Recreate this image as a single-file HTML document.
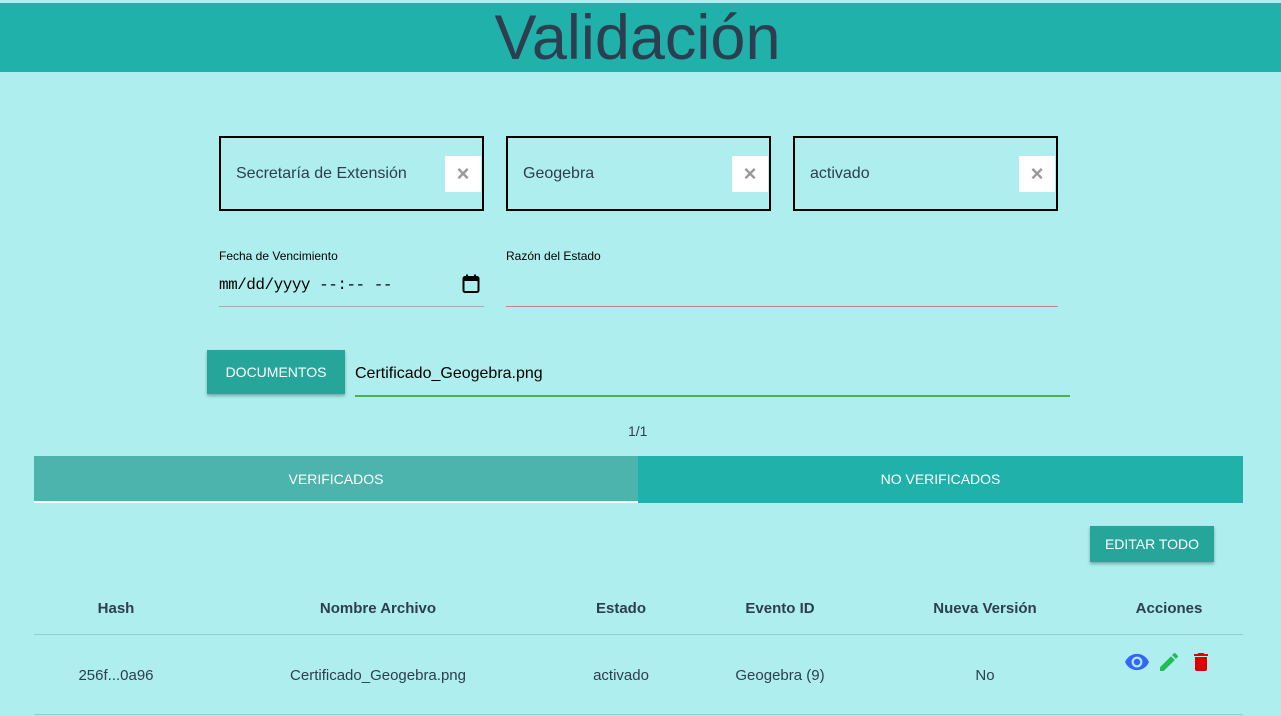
<!DOCTYPE html>
<html><head><meta charset="utf-8"><style>
*{box-sizing:border-box;margin:0;padding:0}
body{width:1281px;height:716px;background:#afeeee;font-family:"Liberation Sans",sans-serif;position:relative;overflow:hidden}
.hdr{position:absolute;left:0;top:3px;width:1281px;height:69px;background:#20b2aa;text-align:center;color:#2c3e50;font-size:63px;line-height:70px;padding-right:6px}
.sel{position:absolute;top:136px;width:265px;height:75px;border:2px solid #000}
.sel span{position:absolute;left:15px;top:27px;font-size:16px;color:#2c3e50}
.sel i{position:absolute;right:1px;top:18px;width:36px;height:36px;background:#fff;color:#999;font-style:normal;font-size:22px;font-weight:bold;text-align:center;line-height:36px}
.lbl{position:absolute;font-size:12px;color:#000}
.line{position:absolute;height:1px;background:#b9878a}
.btn{position:absolute;background:#26a69a;color:#fff;font-size:14px;text-align:center;box-shadow:0 2px 3px rgba(0,0,0,.3)}
.tab{position:absolute;top:456px;height:47px;color:#fff;font-size:14px;text-align:center;line-height:47px}
.th,.td{position:absolute;font-size:15px;color:#2c3e50;text-align:center;transform:translateX(-50%);white-space:nowrap}
.th{top:600px;font-weight:bold}
.td{top:667px}
</style></head><body>
<div class="hdr">Validación</div>
<div class="sel" style="left:219px"><span>Secretaría de Extensión</span><i>×</i></div>
<div class="sel" style="left:506px"><span>Geogebra</span><i>×</i></div>
<div class="sel" style="left:793px"><span>activado</span><i>×</i></div>
<div class="lbl" style="left:219px;top:249px">Fecha de Vencimiento</div>
<div style="position:absolute;left:219px;top:276px;font-size:16px;font-family:'Liberation Mono',monospace;color:#000;letter-spacing:-0.5px">mm/dd/yyyy --:-- --</div>
<svg style="position:absolute;left:462px;top:274px" width="18" height="20" viewBox="0 0 18 20"><rect x="1.5" y="3" width="15" height="15" rx="1.5" fill="none" stroke="#000" stroke-width="2"/><rect x="1.5" y="3" width="15" height="4" fill="#000"/><rect x="4" y="0.5" width="2" height="4" fill="#000"/><rect x="12" y="0.5" width="2" height="4" fill="#000"/></svg>
<div class="line" style="left:219px;top:306px;width:265px;background:#aaa"></div>
<div class="lbl" style="left:506px;top:249px">Razón del Estado</div>
<div class="line" style="left:506px;top:306px;width:552px"></div>
<div class="btn" style="left:207px;top:350px;width:138px;height:44px;line-height:44px">DOCUMENTOS</div>
<div style="position:absolute;left:355px;top:365px;font-size:16px;color:#000">Certificado_Geogebra.png</div>
<div class="line" style="left:355px;top:395px;width:715px;height:2px;background:#4caf50"></div>
<div style="position:absolute;left:628px;top:423px;font-size:14px;color:#2c3e50">1/1</div>
<div class="tab" style="left:34px;width:604px;background:#4db3ad">VERIFICADOS</div>
<div style="position:absolute;left:34px;top:501px;width:604px;height:2px;background:#fff"></div>
<div class="tab" style="left:638px;width:605px;background:#20b2aa">NO VERIFICADOS</div>
<div class="btn" style="left:1090px;top:526px;width:124px;height:36px;line-height:36px">EDITAR TODO</div>
<div class="th" style="left:116px">Hash</div>
<div class="th" style="left:378px">Nombre Archivo</div>
<div class="th" style="left:621px">Estado</div>
<div class="th" style="left:780px">Evento ID</div>
<div class="th" style="left:985px">Nueva Versión</div>
<div class="th" style="left:1169px">Acciones</div>
<div style="position:absolute;left:34px;top:634px;width:1209px;height:1px;background:#8fcfcf"></div>
<div class="td" style="left:116px">256f...0a96</div>
<div class="td" style="left:378px">Certificado_Geogebra.png</div>
<div class="td" style="left:621px">activado</div>
<div class="td" style="left:780px">Geogebra (9)</div>
<div class="td" style="left:985px">No</div>
<svg style="position:absolute;left:1124px;top:649px" width="26" height="26" viewBox="0 0 24 24"><path fill="#3366ff" d="M12 4.5C7 4.5 2.7 7.6 1 12c1.7 4.4 6 7.5 11 7.5s9.3-3.1 11-7.5c-1.7-4.4-6-7.5-11-7.5zM12 17a5 5 0 1 1 0-10 5 5 0 0 1 0 10zm0-8a3 3 0 1 0 0 6 3 3 0 0 0 0-6z"/></svg>
<svg style="position:absolute;left:1157px;top:650px" width="24" height="24" viewBox="0 0 24 24"><path fill="#22bb55" d="M3 17.25V21h3.75L17.8 9.94l-3.75-3.75L3 17.25zM20.7 7.04a1 1 0 0 0 0-1.41l-2.34-2.34a1 1 0 0 0-1.41 0l-1.83 1.83 3.75 3.75 1.83-1.83z"/></svg>
<svg style="position:absolute;left:1189px;top:649px" width="24" height="26" viewBox="0 0 24 24"><path fill="#dd0000" d="M6 19a2 2 0 0 0 2 2h8a2 2 0 0 0 2-2V7H6v12zM19 4h-3.5l-1-1h-5l-1 1H5v2h14V4z"/></svg>
<div style="position:absolute;left:34px;top:714px;width:1209px;height:1px;background:#8fcfcf"></div>
</body></html>
